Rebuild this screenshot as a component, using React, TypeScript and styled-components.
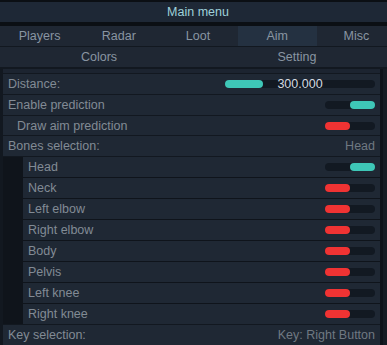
import React from "react";
import styled, { createGlobalStyle } from "styled-components";

const Global = createGlobalStyle`
  html, body {
    margin: 0;
    padding: 0;
    background: #0b0f14;
    overflow: hidden;
  }
  body {
    font-family: "Liberation Sans", Arial, sans-serif;
    font-size: 12.5px;
  }
`;

const Window = styled.div`
  width: 396px;
  padding-top: 2px;
  background: #0b0f14;
`;

const TitleBar = styled.div`
  height: 20px;
  line-height: 20px;
  text-align: center;
  background: #1e2836;
  color: #9fd2db;
  margin-bottom: 4px;
`;

const Body = styled.div`
  background: #121820;
`;

const TabRow = styled.div<{ cols: number; border: number }>`
  display: grid;
  grid-template-columns: repeat(${p => p.cols}, 1fr);
  background: #1f2733;
  border-bottom: ${p => p.border}px solid #121820;
`;

const Tab = styled.div<{ active?: boolean }>`
  height: 20px;
  line-height: 21px;
  text-align: center;
  color: #8995a2;
  background: ${p => (p.active ? "#243141" : "transparent")};
`;

const Panel = styled.div`
  display: flex;
  height: 276px;
  background: #121820;
`;

const List = styled.div`
  flex: 0 0 377px;
  margin-left: 3px;
  display: flex;
  flex-direction: column;
  gap: 1px;
`;

const Strip = styled.div`
  height: 4px;
  background: #1c2430;
`;

const Row = styled.div<{ indent?: number }>`
  height: 20px;
  display: flex;
  align-items: center;
  justify-content: space-between;
  padding: 0 5px 0 ${p => 5 + (p.indent || 0)}px;
  background: #1f2834;
  color: #828b95;
`;

const BoneGroup = styled.div`
  display: flex;
  flex-direction: column;
  gap: 1px;
  padding-left: 20px;
  background: #0f141b;
`;

const Value = styled.span`
  color: #6f7882;
`;

const Track = styled.div<{ w: number }>`
  position: relative;
  width: ${p => p.w}px;
  height: 8px;
  border-radius: 4px;
  background: #121922;
`;

const Fill = styled.div<{ on: boolean; color: string }>`
  position: absolute;
  top: 0;
  ${p => (p.on ? "right: 0;" : "left: 0;")}
  width: 25px;
  height: 8px;
  border-radius: 4px;
  background: ${p => p.color};
`;

const SliderFill = styled.div`
  position: absolute;
  left: 0;
  top: 0;
  height: 8px;
  border-radius: 4px;
  background: #3ec7b7;
`;

const SliderText = styled.span`
  position: absolute;
  left: 0;
  right: 0;
  top: -4px;
  line-height: 16px;
  text-align: center;
  color: #d4dae0;
`;

const Scroll = styled.div`
  flex: 0 0 3px;
  background: #0e131a;
  border-right: 4px solid #161c24;
`;

function Toggle({ on }: { on: boolean }) {
  return (
    <Track w={50}>
      <Fill on={on} color={on ? "#3ec7b7" : "#f03333"} />
    </Track>
  );
}

function Slider({ value, max }: { value: number; max: number }) {
  return (
    <Track w={150}>
      <SliderFill style={{ width: `${(value / max) * 100}%` }} />
      <SliderText>{value.toFixed(3)}</SliderText>
    </Track>
  );
}

const tabs = ["Players", "Radar", "Loot", "Aim", "Misc"];
const bones: [string, boolean][] = [
  ["Head", true],
  ["Neck", false],
  ["Left elbow", false],
  ["Right elbow", false],
  ["Body", false],
  ["Pelvis", false],
  ["Left knee", false],
  ["Right knee", false],
];

export default function App() {
  return (
    <Window>
      <Global />
      <TitleBar>Main menu</TitleBar>
      <Body>
        <TabRow cols={5} border={1}>
          {tabs.map(t => (
            <Tab key={t} active={t === "Aim"}>{t}</Tab>
          ))}
        </TabRow>
        <TabRow cols={2} border={2}>
          <Tab>Colors</Tab>
          <Tab>Setting</Tab>
        </TabRow>
        <Panel>
          <List>
            <Strip />
            <Row>
              <span>Distance:</span>
              <Slider value={300} max={1200} />
            </Row>
            <Row>
              <span>Enable prediction</span>
              <Toggle on />
            </Row>
            <Row indent={9}>
              <span>Draw aim prediction</span>
              <Toggle on={false} />
            </Row>
            <Row>
              <span>Bones selection:</span>
              <Value>Head</Value>
            </Row>
            <BoneGroup>
              {bones.map(([name, on]) => (
                <Row key={name}>
                  <span>{name}</span>
                  <Toggle on={on} />
                </Row>
              ))}
            </BoneGroup>
            <Row>
              <span>Key selection:</span>
              <Value>Key: Right Button</Value>
            </Row>
          </List>
          <Scroll />
        </Panel>
      </Body>
    </Window>
  );
}
